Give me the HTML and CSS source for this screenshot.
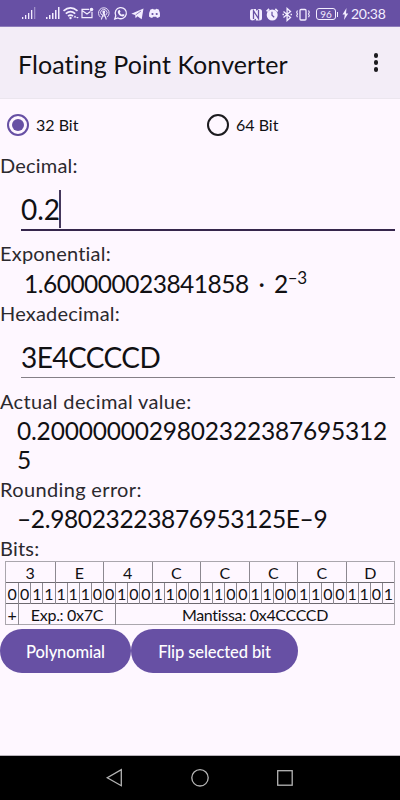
FILE: index.html
```
<!DOCTYPE html>
<html lang="en">

<head>
    <meta charset="UTF-8">
    <meta name="viewport" content="width=device-width, initial-scale=1.0">
    <title>Floating Point Konverter</title>
    <link rel="stylesheet" href="styles.css">
</head>

<body>
    <div class="status-bar">
        <svg class="status-icons" width="146" height="26" viewBox="0 0 146 26">
            <!-- signal bars -->
            <g fill="#f3edff">
                <path d="M0 17h1.300v2H0zM3 15h1.300v4H3zM6 13h1.300v6H6zM9 10h1.300v9H9z" />
                <path d="M12 7h1.300v12H12z" opacity=".4" />
                <path d="M24 17h1.500v2H24zM27 15h1.500v4H27zM30 13h1.500v6H30zM33 10h1.500v9H33zM36 7h1.500v12H36z" />
            </g>
            <!-- wifi -->
            <g fill="none" stroke="#f3edff" stroke-width="1.700">
                <path d="M41.500 10.800q7-6 14 0M43.800 13.600q4.700-4 9.400 0M46 16.200q2.500-2 5 0" />
            </g>
            <circle cx="48.500" cy="18" r="1.200" fill="#f3edff" />
            <path d="M53 15.500l1.500 2h-3zM55.500 18.500l-1.200-1.500h2.400z" fill="#f3edff" />
            <!-- mail -->
            <path d="M67 9.300h-7v8.400h10v-6M60 10.500l5 3.500 3.500-2.500" fill="none" stroke="#f3edff" stroke-width="1.200" />
            <circle cx="69.500" cy="9.500" r="1.800" fill="#f3edff" />
            <!-- antenna -->
            <g fill="none" stroke="#f3edff">
                <path d="M78.500 17.200a5.300 5.300 0 1 1 6.600 0M79.700 15a3.200 3.200 0 1 1 4.200 0" stroke-width=".9" />
                <path d="M81.800 12.500l-2.500 7M81.800 12.500l2.500 7M80.700 16h2.400" stroke-width="1.100" />
            </g>
            <circle cx="81.800" cy="12" r="1.400" fill="#f3edff" />
            <!-- whatsapp -->
            <path d="M92.800 19l1-3.300a5.600 5.600 0 1 1 2.200 2.300z" fill="none" stroke="#f3edff" stroke-width="1.300" />
            <path d="M96.500 10.200l1.300-.2.700 1.800-.7.900q.8 1.400 2.200 2l.9-.8 1.700.9q-.2 2-2.200 1.800-4.100-1.200-4.700-4.700z" fill="#f3edff" />
            <!-- telegram -->
            <path d="M109.300 13.700L121.500 8.500l-1.800 10.800-4.300-3.100-1.800 2-.5-3.300z" fill="#f3edff" />
            <path d="M113.500 15l5.500-4" stroke="#6750a4" stroke-width=".7" />
            <!-- discord -->
            <path d="M128.500 9.500l2.500-.8.700.9h1.800l.7-.9 2.500.8q1.600 2.900 1.300 7-1.500 1.400-3 1.500l-.8-1.200h-3.200l-.8 1.200q-1.700-.2-3.200-1.500-.2-4.100 1.500-7z" fill="#f3edff" />
            <circle cx="130.500" cy="14" r="1.100" fill="#6750a4" />
            <circle cx="134.700" cy="14" r="1.100" fill="#6750a4" />
        </svg>
        <div class="status-right">
            <svg width="62" height="26" viewBox="0 0 62 26">
                <!-- nfc -->
                <rect x="1" y="8" width="12" height="11.500" rx="2.500" fill="#f3edff" />
                <path d="M4.500 18V9.800l5 7.700V9" fill="none" stroke="#6750a4" stroke-width="1.300" />
                <path d="M3.500 19.700l3.500-2v2zM10.500 7.800l-3.500 2v-2z" fill="#6750a4" />
                <!-- alarm -->
                <circle cx="23.200" cy="14" r="5.500" fill="#f3edff" />
                <path d="M17.600 10.300l2.500-2.300M28.800 10.300l-2.500-2.300" stroke="#f3edff" stroke-width="1.700" />
                <path d="M23 10.700v3.500l2.200 2" fill="none" stroke="#6750a4" stroke-width="1.200" />
                <!-- bluetooth -->
                <path d="M34.500 10.500l7 6-3.400 3v-12l3.400 3-7 6" fill="none" stroke="#f3edff" stroke-width="1.300" />
                <path d="M33.500 13.500h1.500M41.500 13.500H43" stroke="#f3edff" stroke-width="1.300" />
                <!-- vibrate -->
                <rect x="51" y="8.500" width="6" height="10.500" rx="1" fill="none" stroke="#f3edff" stroke-width="1.300" />
                <path d="M48.500 9.500l-.8 1.700.8 1.700-.8 1.700.8 1.700M59.500 9.500l.8 1.700-.8 1.700.8 1.700-.8 1.700" fill="none" stroke="#f3edff" stroke-width="1.100" />
            </svg>
            <span class="battery">96</span>
            <svg class="bolt" width="9" height="12" viewBox="0 0 9 12">
                <path d="M5.500 0L1.500 6.500h2.300L3 12l4.200-6.500H5z" fill="#f3edff" />
            </svg>
            <span class="clock">20:38</span>
        </div>
    </div>

    <header class="app-bar">
        <h1>Floating Point Konverter</h1>
        <div class="menu-dots">
            <span></span>
            <span></span>
            <span></span>
        </div>
    </header>

    <main>
        <div class="radio-group">
            <div class="radio selected"><span class="radio-circle"></span><span>32 Bit</span></div>
            <div class="radio"><span class="radio-circle"></span><span>64 Bit</span></div>
        </div>

        <p class="label">Decimal:</p>
        <div class="input focused"><span>0.2</span><i class="cursor"></i></div>

        <p class="label exponential-label">Exponential:</p>
        <p class="value exponential"><span>1.600000023841858 · 2</span><sup>–3</sup></p>

        <p class="label">Hexadecimal:</p>
        <div class="input hex"><span>3E4CCCCD</span></div>

        <p class="label actual-label">Actual decimal value:</p>
        <p class="value actual">0.20000000298023223876953125</p>

        <p class="label error-label">Rounding error:</p>
        <p class="value error">–2.98023223876953125E–9</p>

        <p class="label bits-label">Bits:</p>
        <div class="bits">
            <div class="bits-row nibbles">
                <span>3</span><span>E</span><span>4</span><span>C</span><span>C</span><span>C</span><span>C</span><span>D</span>
            </div>
            <div class="bits-row single">
                <span>0</span><span>0</span><span>1</span><span>1</span><span>1</span><span>1</span><span>1</span><span>0</span>
                <span>0</span><span>1</span><span>0</span><span>0</span><span>1</span><span>1</span><span>0</span><span>0</span>
                <span>1</span><span>1</span><span>0</span><span>0</span><span>1</span><span>1</span><span>0</span><span>0</span>
                <span>1</span><span>1</span><span>0</span><span>0</span><span>1</span><span>1</span><span>0</span><span>1</span>
            </div>
            <div class="bits-row parts">
                <span>+</span><span>Exp.: 0x7C</span><span>Mantissa: 0x4CCCCD</span>
            </div>
        </div>

        <div class="buttons">
            <button class="polynomial">Polynomial</button>
            <button class="flip">Flip selected bit</button>
        </div>
    </main>

    <nav class="nav-bar">
        <svg width="400" height="44" viewBox="0 0 400 44" fill="none" stroke="#b5b5b5" stroke-width="1.300">
            <path d="M121.300 13.700v16L107.300 21.800z" />
            <circle cx="200" cy="21.800" r="8.200" />
            <rect x="277.700" y="14.700" width="14.500" height="14.500" />
        </svg>
    </nav>
</body>

</html>
```
FILE: styles.css
```
* {
    box-sizing: border-box;
}

body {
    font-family: Lato, "Liberation Sans", sans-serif;
    font-variant-ligatures: none;
    background-color: #fef7ff;
    color: #111013;
    margin: 0;
    height: 800px;
    display: flex;
    flex-direction: column;
    overflow: hidden;
}

p,
h1 {
    margin: 0;
    font-weight: 400;
}

.status-bar {
    height: 27px;
    background-color: #6750a4;
    color: #f3edff;
    display: flex;
    justify-content: space-between;
    padding: 0 15px 0 22px;
    border-bottom: 1px solid #8d7cba;
}

.status-icons {
    flex: none;
}

.status-right {
    display: flex;
    align-items: center;
    height: 26px;
    margin-top: 1px;
}

.status-right svg {
    margin-top: -1px;
}

.battery {
    width: 20px;
    height: 12px;
    margin-left: 5px;
    border: 1px solid #f3edff;
    border-radius: 3px;
    font-size: 10px;
    line-height: 10px;
    text-align: center;
    position: relative;
}

.battery::after {
    content: "";
    position: absolute;
    right: -3px;
    top: 3px;
    width: 1px;
    height: 5px;
    background-color: #f3edff;
}

.status-right .bolt {
    margin: 0 0 0 5px;
}

.clock {
    font-size: 14px;
    width: 34px;
    margin-left: 1px;
    line-height: 26px;
    letter-spacing: -0.3px;
}

.app-bar {
    height: 72px;
    background-color: #f3edf7;
    border-bottom: 1px solid #ebe6ee;
    display: flex;
    justify-content: space-between;
    padding: 0 22px 0 18px;
}

.app-bar h1 {
    font-size: 25px;
    line-height: 74px;
    letter-spacing: 0.08px;
    white-space: nowrap;
}

.menu-dots {
    display: flex;
    flex-direction: column;
    gap: 2.5px;
    padding-top: 26px;
}

.menu-dots span {
    width: 4.5px;
    height: 4.5px;
    border-radius: 50%;
    background-color: #1c1b1f;
}

main {
    flex: 1;
}

.radio-group {
    display: grid;
    grid-template-columns: 200px 200px;
    height: 51px;
}

.radio {
    display: flex;
    align-items: center;
    gap: 7px;
    padding-left: 7px;
    font-size: 16px;
}

.radio-circle {
    width: 22px;
    height: 22px;
    border: 2px solid #1c1b1f;
    border-radius: 50%;
    display: flex;
    align-items: center;
    justify-content: center;
}

.selected .radio-circle {
    border-color: #6750a4;
}

.selected .radio-circle::after {
    content: "";
    width: 12px;
    height: 12px;
    border-radius: 50%;
    background-color: #6750a4;
}

.label {
    font-size: 20px;
    height: 30px;
    line-height: 30px;
    letter-spacing: 0.2px;
    color: #2b292e;
    white-space: nowrap;
}

.value {
    font-size: 24.5px;
    line-height: 29px;
    white-space: nowrap;
}

.input {
    height: 51px;
    margin-left: 21px;
    margin-right: 5px;
    padding-top: 8px;
    border-bottom: 1px solid #858087;
    font-size: 28px;
    display: flex;
    align-items: center;
}

.focused {
    border-bottom: 2px solid #35264c;
}

.cursor {
    width: 2px;
    height: 38px;
    margin-left: -1px;
    background-color: #45375c;
}

.exponential-label {
    margin-top: 7px;
}

.exponential {
    padding-left: 24px;
    height: 30px;
    line-height: 31px;
    letter-spacing: -0.5px;
    word-spacing: 4px;
}

.exponential sup {
    font-size: 17px;
    line-height: 0;
    vertical-align: 9px;
}

.hex {
    height: 50px;
    letter-spacing: -0.55px;
}

.actual-label {
    margin-top: 8px;
    letter-spacing: 0.35px;
}

.actual {
    padding-left: 17px;
    width: 394px;
    white-space: normal;
    word-break: break-all;
    letter-spacing: -0.19px;
}

.error-label {
    letter-spacing: 0.35px;
}

.error {
    padding-left: 17px;
    letter-spacing: -0.35px;
}

.bits-label {
    height: 28px;
}

.bits {
    margin: 0 5px;
    border: 1px solid #aaa6ad;
    border-bottom: 0;
    font-size: 16px;
    line-height: 21px;
    text-align: center;
}

.bits-row {
    display: grid;
    height: 21px;
    border-bottom: 1px solid #aaa6ad;
}

.bits-row span {
    border-left: 1px solid #8c8890;
    white-space: nowrap;
}

.bits-row span:first-child {
    border-left: 0;
}

.nibbles {
    grid-template-columns: repeat(8, 1fr);
    border-bottom-color: #6d6970;
}

.single {
    grid-template-columns: repeat(32, minmax(0, 1fr));
    border-bottom-color: #6d6970;
}

.parts {
    grid-template-columns: 12px 97px 1fr;
    letter-spacing: -0.3px;
}

.buttons {
    display: flex;
    margin-top: 4px;
}

.buttons button {
    height: 44px;
    border: 0;
    border-radius: 22px;
    background-color: #6750a4;
    color: #fff;
    font-family: inherit;
    font-size: 16.5px;
    font-weight: 500;
    padding: 2px 0 0;
    letter-spacing: -0.1px;
    white-space: nowrap;
}

.polynomial {
    width: 131px;
}

.flip {
    width: 167px;
}

.nav-bar {
    height: 45px;
    background-color: #000;
    border-top: 1px solid #b8b3ba;
}
```
